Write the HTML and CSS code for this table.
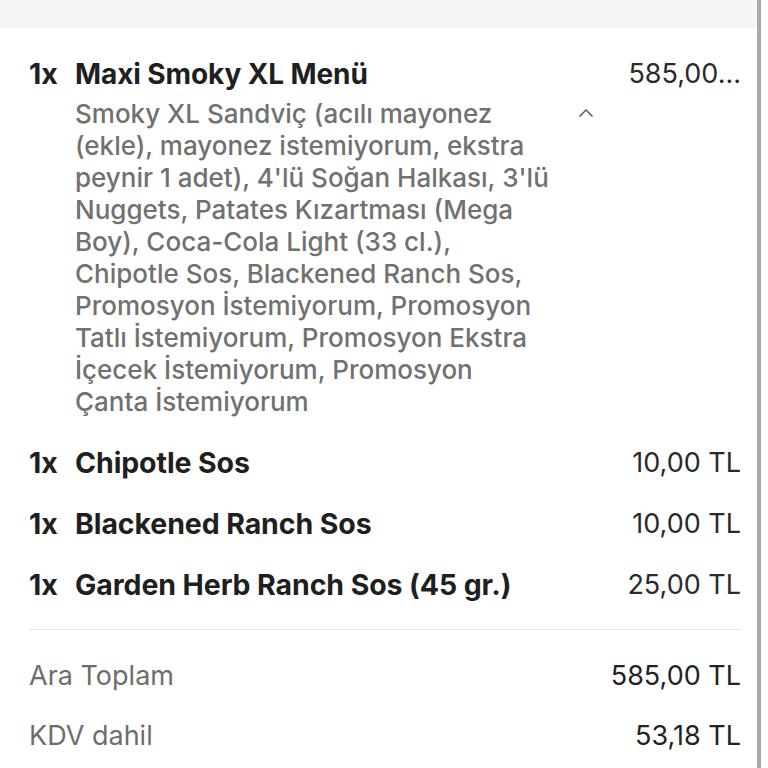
FILE: index.html
```html
<!DOCTYPE html>
<html lang="tr">
<head>
<meta charset="utf-8">
<link rel="stylesheet" href="styles.css">
</head>
<body>
<div class="panel">
  <div class="topband"></div>
  <div class="content">
    <div class="items">
      <div class="item">
        <span class="qty">1x</span>
        <div class="main">
          <div class="name title">Maxi Smoky XL Menü</div>
          <div class="desc-row">
            <div class="desc">Smoky XL Sandviç (acılı mayonez<br>(ekle), mayonez istemiyorum, ekstra<br>peynir 1 adet), 4'lü Soğan Halkası, 3'lü<br>Nuggets, Patates Kızartması (Mega<br>Boy), Coca-Cola Light (33 cl.),<br>Chipotle Sos, Blackened Ranch Sos,<br>Promosyon İstemiyorum, Promosyon<br>Tatlı İstemiyorum, Promosyon Ekstra<br>İçecek İstemiyorum, Promosyon<br>Çanta İstemiyorum</div>
            <svg class="chev" width="16" height="10" viewBox="0 0 16 10"><path d="M1.5 8.5 L8 2 L14.5 8.5" fill="none" stroke="#5a5a5a" stroke-width="1.5"/></svg>
          </div>
        </div>
        <span class="price">585,00...</span>
      </div>
      <div class="item">
        <span class="qty">1x</span>
        <div class="main"><div class="name">Chipotle Sos</div></div>
        <span class="price">10,00 TL</span>
      </div>
      <div class="item">
        <span class="qty">1x</span>
        <div class="main"><div class="name">Blackened Ranch Sos</div></div>
        <span class="price">10,00 TL</span>
      </div>
      <div class="item">
        <span class="qty">1x</span>
        <div class="main"><div class="name">Garden Herb Ranch Sos (45 gr.)</div></div>
        <span class="price">25,00 TL</span>
      </div>
    </div>
    <div class="totals">
      <div class="trow"><span class="label">Ara Toplam</span><span class="value">585,00 TL</span></div>
      <div class="trow"><span class="label">KDV dahil</span><span class="value">53,18 TL</span></div>
    </div>
  </div>
</div>
</body>
</html>
```
FILE: styles.css
```css
html, body {
  margin: 0;
  padding: 0;
  background: #ffffff;
}
body {
  font-family: Inter, "Noto Sans", sans-serif;
  color: #222;
}
.panel {
  width: 757px;
  height: 768px;
  border-right: 4px solid #a9a9a9;
  overflow: hidden;
}
.topband {
  height: 28px;
  background: #f5f5f5;
}
.content {
  padding: 30px 16px 0 29px;
}
.items {
  display: flex;
  flex-direction: column;
  gap: 29px;
}
.item {
  display: grid;
  grid-template-columns: 46px 1fr auto;
  align-items: start;
  line-height: 32px;
}
.qty, .name {
  font-size: 28.5px;
  font-weight: 700;
  color: #1f1f1f;
  letter-spacing: -0.1px;
}
.name {
  white-space: nowrap;
}
.title {
  font-size: 28px;
}
.price {
  font-size: 27px;
  color: #2a2a2a;
  text-align: right;
}
.desc-row {
  display: flex;
  align-items: flex-start;
  margin-top: 8px;
}
.desc {
  flex: 0 0 500px;
  font-size: 26px;
  font-weight: 500;
  color: #717171;
  line-height: 32px;
  white-space: nowrap;
}
.chev {
  margin-top: 10px;
  margin-left: 3px;
}
.totals {
  margin-top: 28px;
  border-top: 1.5px solid #e6e6e6;
  padding-top: 30px;
  display: flex;
  flex-direction: column;
  gap: 28px;
}
.trow {
  display: flex;
  justify-content: space-between;
  line-height: 32px;
  font-size: 27px;
}
.label {
  color: #6d6d6d;
}
.value {
  color: #222;
}
```
